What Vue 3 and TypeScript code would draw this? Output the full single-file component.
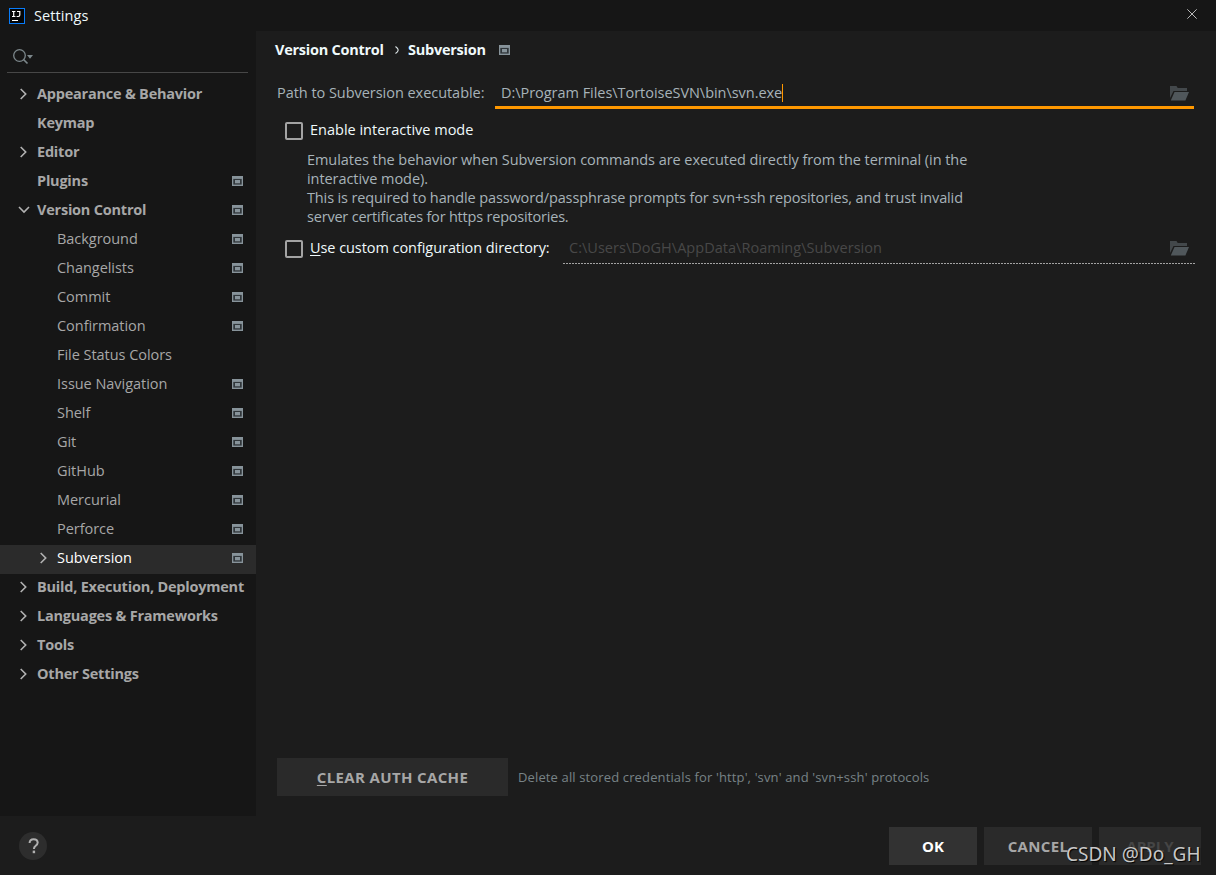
<script setup lang="ts">
interface TreeItem {
  label: string
  level: 0 | 1
  arrow?: 'right' | 'down'
  project?: boolean
  selected?: boolean
}

const items: TreeItem[] = [
  { label: 'Appearance & Behavior', level: 0, arrow: 'right' },
  { label: 'Keymap', level: 0 },
  { label: 'Editor', level: 0, arrow: 'right' },
  { label: 'Plugins', level: 0, project: true },
  { label: 'Version Control', level: 0, arrow: 'down', project: true },
  { label: 'Background', level: 1, project: true },
  { label: 'Changelists', level: 1, project: true },
  { label: 'Commit', level: 1, project: true },
  { label: 'Confirmation', level: 1, project: true },
  { label: 'File Status Colors', level: 1 },
  { label: 'Issue Navigation', level: 1, project: true },
  { label: 'Shelf', level: 1, project: true },
  { label: 'Git', level: 1, project: true },
  { label: 'GitHub', level: 1, project: true },
  { label: 'Mercurial', level: 1, project: true },
  { label: 'Perforce', level: 1, project: true },
  { label: 'Subversion', level: 1, arrow: 'right', project: true, selected: true },
  { label: 'Build, Execution, Deployment', level: 0, arrow: 'right' },
  { label: 'Languages & Frameworks', level: 0, arrow: 'right' },
  { label: 'Tools', level: 0, arrow: 'right' },
  { label: 'Other Settings', level: 0, arrow: 'right' },
]

const description = [
  'Emulates the behavior when Subversion commands are executed directly from the terminal (in the',
  'interactive mode).',
  'This is required to handle password/passphrase prompts for svn+ssh repositories, and trust invalid',
  'server certificates for https repositories.',
]
</script>

<template>
  <div class="dialog">
    <header class="titlebar">
      <svg class="logo" width="16" height="16" viewBox="0 0 16 16">
        <rect width="16" height="16" fill="#087cfa" />
        <rect x="1" y="1" width="14" height="14" fill="#050505" />
        <path d="M3 3.5h3.4M4.7 3.5v5M3 8.5h3.4M8 3.5h2.8v3.6q0 1.4-1.4 1.4H7.6" fill="none" stroke="#fff" stroke-width="1.2" />
        <rect x="3" y="12" width="6" height="1" fill="#fff" />
      </svg>
      <span class="title">Settings</span>
      <svg class="close" width="10" height="10" viewBox="0 0 10 10">
        <path d="M.3.3l9.4 9.4M9.7.3L.3 9.7" stroke="#b8b8b8" stroke-width="1" />
      </svg>
    </header>

    <div class="body">
      <nav class="sidebar">
        <div class="search">
          <svg width="21" height="16" viewBox="0 0 21 16">
            <circle cx="6.5" cy="6.5" r="5.8" fill="none" stroke="#7c878b" stroke-width="1.3" />
            <path d="M10.5 10.5l4 4" stroke="#7c878b" stroke-width="1.7" />
            <path d="M14 6h6l-3 3.8z" fill="#7c878b" />
          </svg>
        </div>
        <ul class="tree">
          <li
            v-for="item in items"
            :key="item.label"
            :class="['row', item.level ? 'child' : 'root', { selected: item.selected }]"
          >
            <span class="arrow">
              <svg v-if="item.arrow === 'right'" width="8" height="12" viewBox="0 0 8 12">
                <path d="M1.7 1l5 5-5 5" fill="none" stroke="#b2b2b2" stroke-width="1.6" />
              </svg>
              <svg v-else-if="item.arrow === 'down'" class="down" width="12" height="8" viewBox="0 0 12 8">
                <path d="M1 1l5 5 5-5" fill="none" stroke="#b2b2b2" stroke-width="1.6" />
              </svg>
            </span>
            <span class="label">{{ item.label }}</span>
            <svg v-if="item.project" class="project" width="11" height="10" viewBox="0 0 11 10">
              <rect width="11" height="10" fill="#87939a" />
              <rect x="1.3" y="2.9" width="8.4" height="5.7" fill="#30363a" />
              <rect x="3" y="4" width="5" height="3.3" fill="#87939a" />
            </svg>
          </li>
        </ul>
      </nav>

      <main class="content">
        <h1 class="crumbs">
          <span class="crumb-parent">Version Control</span>
          <svg class="crumb-arrow" width="4" height="8" viewBox="0 0 4 8">
            <path d="M.5.5Q3.2 2.4 3.2 4T.5 7.5" fill="none" stroke="#dde6e8" stroke-width="1.1" />
          </svg>
          <span class="crumb-current">Subversion</span>
          <svg width="11" height="10" viewBox="0 0 11 10">
            <rect width="11" height="10" fill="#87939a" />
            <rect x="1.3" y="2.9" width="8.4" height="5.7" fill="#30363a" />
            <rect x="3" y="4" width="5" height="3.3" fill="#87939a" />
          </svg>
        </h1>

        <div class="path-row">
          <span class="path-label">Path to Subversion executable:</span>
          <div class="field focused">
            <span class="path-value">D:\Program Files\TortoiseSVN\bin\svn.exe</span><i class="caret"></i>
            <svg class="folder" width="19" height="15" viewBox="0 0 19 15">
              <path d="M0 12V0h6.5l1.2 2H17v3H3.5z" fill="#43484b" />
              <path d="M4.5 6H19l-3.6 8.5H.8z" fill="#50575b" />
            </svg>
          </div>
        </div>

        <div class="check-row interactive">
          <i class="box"></i>
          <span>Enable interactive mode</span>
        </div>

        <div class="description">
          <div v-for="(line, i) in description" :key="i" :class="['line', 'line-' + i]">{{ line }}</div>
        </div>

        <div class="check-row custom">
          <i class="box"></i>
          <span class="custom-label"><u>U</u>se custom configuration directory:</span>
          <div class="field disabled">
            <span class="dir-value">C:\Users\DoGH\AppData\Roaming\Subversion</span>
            <svg class="folder" width="19" height="15" viewBox="0 0 19 15">
              <path d="M0 12V0h6.5l1.2 2H17v3H3.5z" fill="#43484b" />
              <path d="M4.5 6H19l-3.6 8.5H.8z" fill="#50575b" />
            </svg>
          </div>
        </div>

        <div class="auth-row">
          <button class="btn clear"><span><u>C</u>LEAR AUTH CACHE</span></button>
          <span class="hint">Delete all stored credentials for 'http', 'svn' and 'svn+ssh' protocols</span>
        </div>
      </main>
    </div>

    <footer class="footer">
      <span class="help">
        <svg width="12" height="16" viewBox="0 0 12 16">
          <path d="M1.6 5Q1.7 1.2 5.6 1.2T9.7 4.6Q9.7 6.2 7.7 7.7 5.9 9 5.9 11" fill="none" stroke="#b0b0b0" stroke-width="2" />
          <rect x="4.7" y="12.6" width="2.4" height="2.6" fill="#b0b0b0" />
        </svg>
      </span>
      <button class="btn ok">OK</button>
      <button class="btn cancel">CANCEL</button>
      <button class="btn apply">APPLY</button>
    </footer>
    <span class="watermark">CSDN @Do_GH</span>
  </div>
</template>

<style>
body {
  background: #1c1c1c;
}
</style>

<style scoped>
.dialog {
  position: relative;
  width: 1216px;
  height: 875px;
  display: flex;
  flex-direction: column;
  overflow: hidden;
  background: #1c1c1c;
  color: #a7a7a7;
  font: 14.5px/20px "Open Sans", "Noto Sans", sans-serif;
  white-space: nowrap;
}
svg {
  display: block;
  flex: none;
}
u {
  text-decoration-thickness: 1px;
  text-underline-offset: 2px;
}
.titlebar {
  height: 31px;
  flex: none;
  display: flex;
  align-items: flex-start;
  background: #161616;
}
.logo {
  margin: 8px 9px 0;
}
.title {
  margin-top: 6px;
  color: #eff9fb;
  letter-spacing: 0.08px;
}
.close {
  margin: 9px 19px 0 auto;
}
.body {
  height: 785px;
  flex: none;
  display: flex;
}
.sidebar {
  width: 256px;
  flex: none;
  background: #161616;
}
.search {
  height: 41px;
  margin: 1px 8px 8px 7px;
  padding: 17px 0 0 6px;
  box-sizing: border-box;
  border-bottom: 1px solid #474747;
}
.tree {
  list-style: none;
  margin: 0;
  padding: 0;
}
.row {
  height: 29px;
  box-sizing: border-box;
  display: flex;
  align-items: center;
  padding: 0 13px 3px 17px;
}
.child {
  padding-left: 37px;
}
.child .label {
  letter-spacing: -0.04px;
}
.root .label {
  font-weight: 700;
  letter-spacing: -0.22px;
}
.selected {
  background: #2b2b2b;
  color: #fff;
}
.arrow {
  width: 12px;
  margin-right: 8px;
  display: flex;
  justify-content: center;
  flex: none;
}
.down {
  margin-left: 1px;
}
.project {
  margin-left: auto;
}
.content {
  width: 960px;
  box-sizing: border-box;
  padding: 9px 21px 0;
  display: flex;
  flex-direction: column;
}
.crumbs {
  margin: 0 0 0 -2px;
  height: 20px;
  font-size: 14.5px;
  font-weight: 700;
  letter-spacing: -0.25px;
  color: #eff9fb;
  display: flex;
  align-items: center;
}
.crumb-parent {
  width: 120px;
}
.crumb-current {
  width: 91px;
  margin-left: 9px;
}
.path-row {
  margin-top: 20px;
  height: 29px;
  display: flex;
  color: #a7b3b9;
}
.path-label {
  width: 218px;
  margin-top: 3px;
  letter-spacing: -0.04px;
}
.path-value {
  letter-spacing: -0.04px;
}
.field {
  display: flex;
  align-items: center;
  box-sizing: border-box;
}
.focused {
  width: 699px;
  border-bottom: 3px solid #ff9800;
  padding: 0 5px 0 6px;
}
.caret {
  width: 1px;
  height: 18px;
  background: #ff9800;
}
.folder {
  margin-left: auto;
  margin-top: 2px;
}
.focused .folder {
  margin-top: 1px;
}
.check-row {
  display: flex;
  align-items: center;
  color: #eff9fb;
}
.interactive {
  margin: 11px 0 0 8px;
  height: 20px;
}
.box {
  width: 18px;
  height: 18px;
  box-sizing: border-box;
  border: 2px solid #a3a3a3;
  border-radius: 2px;
  margin: 2px 7px 0 0;
  flex: none;
}
.description {
  margin: 10px 0 0 30px;
  color: #a7b3b9;
  line-height: 19px;
}
.line-0 {
  letter-spacing: -0.055px;
}
.line-1 {
  letter-spacing: -0.06px;
}
.line-2 {
  letter-spacing: -0.127px;
}
.line-3 {
  letter-spacing: -0.2px;
}
.custom {
  margin: 5px 0 0 8px;
  height: 33px;
}
.custom-label {
  width: 253px;
  letter-spacing: -0.06px;
}
.disabled {
  width: 632px;
  height: 33px;
  color: #484848;
  padding: 0 6px;
  background: repeating-linear-gradient(90deg, #a3a3a3 0 2px, transparent 2px 3px) left bottom / 100% 1px no-repeat;
}
.dir-value {
  letter-spacing: 0.025px;
}
.auth-row {
  margin: auto 0 20px;
  height: 38px;
  display: flex;
  align-items: center;
}
.btn {
  height: 38px;
  border: 0;
  padding: 0;
  flex: none;
  background: #2a2a2a;
  color: #a7a7a7;
  font: 700 15px/20px "Open Sans", "Noto Sans", sans-serif;
}
.clear {
  width: 231px;
  letter-spacing: 0.35px;
}
.hint {
  margin-left: 10px;
  font-size: 13px;
  letter-spacing: 0.135px;
  color: #788387;
}
.footer {
  flex: 1;
  display: flex;
  align-items: flex-start;
  padding: 11px 15px 0 19px;
}
.help {
  width: 28px;
  height: 28px;
  box-sizing: border-box;
  padding-left: 1px;
  margin: 5px auto 0 0;
  border-radius: 50%;
  background: #2d2d2d;
  display: flex;
  align-items: center;
  justify-content: center;
}
.ok {
  width: 88px;
  background: #323232;
  color: #fff;
}
.cancel {
  width: 108px;
  margin: 0 7px;
  letter-spacing: 0.35px;
}
.apply {
  width: 102px;
  color: #454545;
}
.watermark {
  position: absolute;
  left: 1066px;
  top: 841px;
  font: 19px/26px "Noto Sans", sans-serif;
  color: #c8c8c8;
  text-shadow: 1px 1px 1px #000;
}
</style>
